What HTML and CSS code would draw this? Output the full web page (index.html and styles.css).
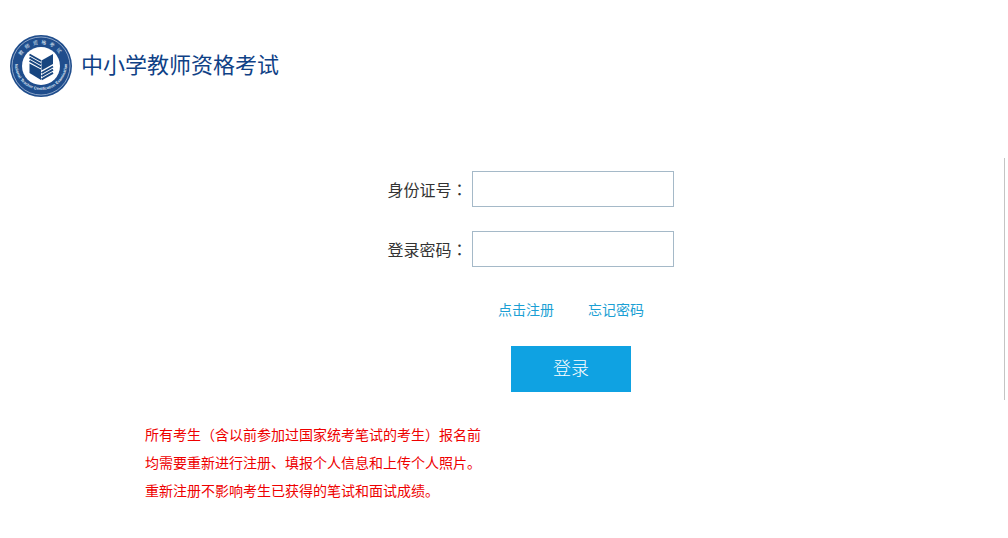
FILE: index.html
```html
<!DOCTYPE html>
<html lang="zh-CN">
<head>
<meta charset="utf-8">
<meta name="viewport" content="width=device-width, initial-scale=1">
<title>中小学教师资格考试</title>
<link rel="stylesheet" href="styles.css">
</head>
<body>
<header class="header">
  <svg class="seal" viewBox="0 0 62 62" aria-hidden="true">
    <defs>
      <path id="arc-top" d="M9 31a22 22 0 0 1 44 0"/>
      <path id="arc-bottom" d="M5 29a26 26 0 0 0 52 0"/>
    </defs>
    <circle cx="31" cy="31" r="31" fill="#1f4d8c"/>
    <circle cx="31" cy="31" r="29" fill="none" stroke="#a9bcd8" stroke-width=".8"/>
    <circle cx="31" cy="31" r="19" fill="#fff"/>
    <text class="seal-top"><textPath href="#arc-top" startOffset="50%">教师资格考试</textPath></text>
    <text class="seal-bottom"><textPath href="#arc-bottom" startOffset="50%">National Teacher Certification Examination</textPath></text>
    <g fill="#17457f">
      <path d="M19.500 28.500l11.500 6v10.500l-11.500-7z"/>
      <path d="M43 19v10L31.500 35.500v-10z"/>
    </g>
    <path d="M19.500 19.500L31 26M19.500 22.700L31 29.200M19.500 25.900L31 32.400M43 31.500L31.500 38M43 34.700L31.500 41.200M43 37.900L31.500 44.400" fill="none" stroke="#17457f" stroke-width="1.900"/>
  </svg>
  <h1 class="title">中小学教师资格考试</h1>
</header>
<main>
  <section class="login">
    <form class="form">
      <div class="row">
        <label for="id-number">身份证号<span class="colon" lang="zh-TW">：</span></label>
        <input class="field" id="id-number" type="text">
      </div>
      <div class="row">
        <label for="password">登录密码<span class="colon" lang="zh-TW">：</span></label>
        <input class="field" id="password" type="password">
      </div>
      <div class="actions">
        <nav class="links">
          <a href="#register">点击注册</a>
          <a href="#forgot">忘记密码</a>
        </nav>
        <button class="submit" type="submit">登录</button>
      </div>
    </form>
  </section>
  <p class="notice">所有考生（含以前参加过国家统考笔试的考生）报名前<br>均需要重新进行注册、填报个人信息和上传个人照片。<br>重新注册不影响考生已获得的笔试和面试成绩。</p>
</main>
</body>
</html>
```
FILE: styles.css
```css
* {
  box-sizing: border-box;
}

body {
  margin: 0;
  background: #fff;
  color: #333;
  font-family: "Noto Sans CJK SC", sans-serif;
  font-size: 16px;
  line-height: 24px;
}

.header {
  display: flex;
  align-items: center;
  gap: 9px;
  padding: 35px 10px 61px;
}

.seal {
  width: 62px;
  height: 62px;
}

.seal text {
  fill: #dfe8f4;
  font-family: "Noto Sans CJK SC", sans-serif;
  text-anchor: middle;
}

.seal .seal-top {
  font-size: 5px;
  letter-spacing: 3px;
}

.seal .seal-bottom {
  font-family: "Liberation Sans", sans-serif;
  font-size: 4px;
  font-weight: bold;
}

.title {
  margin: 0;
  padding-bottom: 6px;
  color: #0f4186;
  font-size: 22px;
  font-weight: 400;
  line-height: 32px;
}

.login {
  display: flex;
  justify-content: center;
  margin-right: 3px;
  padding: 13px 0 8px 57px;
  border-right: 1px solid #c4c4c4;
}

.form {
  display: flex;
  flex-direction: column;
  gap: 24px;
}

.row {
  display: flex;
  align-items: center;
  gap: 4px;
}

.colon {
  font-family: "Noto Sans CJK TC", sans-serif;
}

.field {
  width: 202px;
  height: 36px;
  padding: 0 8px;
  border: 1px solid #a5b9c8;
  border-radius: 0;
  background: #fff;
  font: inherit;
}

.actions {
  display: flex;
  flex-direction: column;
  align-items: center;
  gap: 25px;
  margin-top: 6px;
  padding-left: 81px;
}

.links {
  display: flex;
  gap: 34px;
  font-size: 14px;
}

.links a {
  color: #1b9fd4;
  text-decoration: none;
}

.submit {
  width: 120px;
  height: 46px;
  padding: 0 0 4px;
  border: 0;
  background: #0fa2e2;
  color: #fff;
  font: inherit;
  font-size: 18px;
  font-weight: 300;
}

.notice {
  margin: 20px 16px 0 145px;
  color: #ee0000;
  font-size: 14px;
  line-height: 28px;
}
```
